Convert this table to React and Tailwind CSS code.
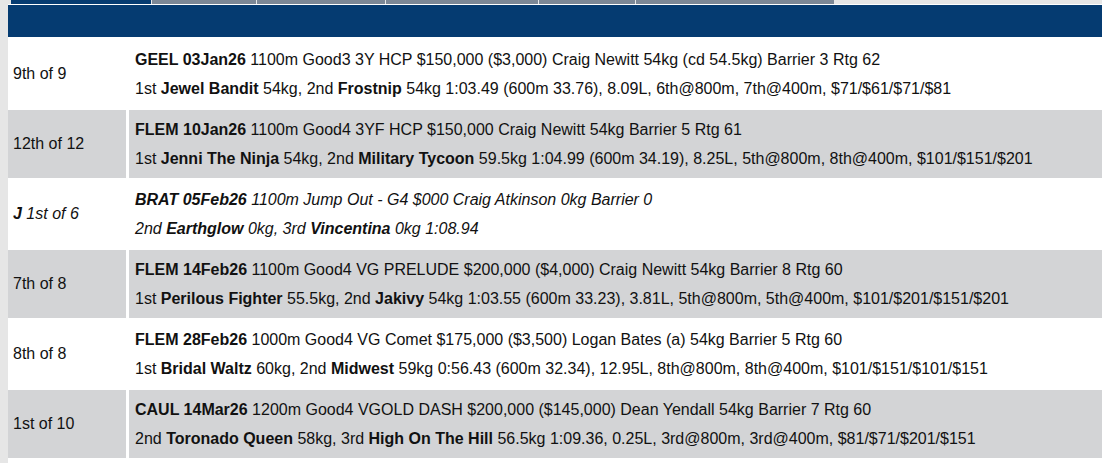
const races = [
  {
    pos: "9th of 9",
    bg: "bg-white",
    head: "GEEL 03Jan26",
    info: " 1100m Good3 3Y HCP $150,000 ($3,000) Craig Newitt 54kg (cd 54.5kg) Barrier 3 Rtg 62",
    result: [["1st ", "Jewel Bandit", " 54kg, 2nd "], ["", "Frostnip", " 54kg 1:03.49 (600m 33.76), 8.09L, 6th@800m, 7th@400m, $71/$61/$71/$81"]],
  },
  {
    pos: "12th of 12",
    bg: "bg-[#d3d4d6]",
    head: "FLEM 10Jan26",
    info: " 1100m Good4 3YF HCP $150,000 Craig Newitt 54kg Barrier 5 Rtg 61",
    result: [["1st ", "Jenni The Ninja", " 54kg, 2nd "], ["", "Military Tycoon", " 59.5kg 1:04.99 (600m 34.19), 8.25L, 5th@800m, 8th@400m, $101/$151/$201"]],
  },
  {
    pos: "1st of 6",
    jumpOut: true,
    bg: "bg-white",
    head: "BRAT 05Feb26",
    info: " 1100m Jump Out - G4 $000 Craig Atkinson 0kg Barrier 0",
    result: [["2nd ", "Earthglow", " 0kg, 3rd "], ["", "Vincentina", " 0kg 1:08.94"]],
  },
  {
    pos: "7th of 8",
    bg: "bg-[#d3d4d6]",
    head: "FLEM 14Feb26",
    info: " 1100m Good4 VG PRELUDE $200,000 ($4,000) Craig Newitt 54kg Barrier 8 Rtg 60",
    result: [["1st ", "Perilous Fighter", " 55.5kg, 2nd "], ["", "Jakivy", " 54kg 1:03.55 (600m 33.23), 3.81L, 5th@800m, 5th@400m, $101/$201/$151/$201"]],
  },
  {
    pos: "8th of 8",
    bg: "bg-white",
    head: "FLEM 28Feb26",
    info: " 1000m Good4 VG Comet $175,000 ($3,500) Logan Bates (a) 54kg Barrier 5 Rtg 60",
    result: [["1st ", "Bridal Waltz", " 60kg, 2nd "], ["", "Midwest", " 59kg 0:56.43 (600m 32.34), 12.95L, 8th@800m, 8th@400m, $101/$151/$101/$151"]],
  },
  {
    pos: "1st of 10",
    bg: "bg-[#d3d4d6]",
    head: "CAUL 14Mar26",
    info: " 1200m Good4 VGOLD DASH $200,000 ($145,000) Dean Yendall 54kg Barrier 7 Rtg 60",
    result: [["2nd ", "Toronado Queen", " 58kg, 3rd "], ["", "High On The Hill", " 56.5kg 1:09.36, 0.25L, 3rd@800m, 3rd@400m, $81/$71/$201/$151"]],
  },
];

const tabs = ["w-[104px]", "w-[128px]", "w-[152px]", "w-[96px]", "w-[198px]"];

const App = () => {
  return (
    <div className="flex w-[1102px] h-[463px] bg-white overflow-hidden font-['Liberation_Sans',Arial,sans-serif] text-[16px] text-[#111]">
      <div className="w-[8px] shrink-0 bg-[#e6e6e6]" />
      <div className="flex-1 flex flex-col">
        <div className="flex h-[4px] bg-[#e6e6e6] gap-[1px]">
          <div className="w-[2px] bg-[#e6e6e6]" />
          <div className="w-[140px] bg-[#053b71]" />
          {tabs.map((w, i) => (
            <div key={i} className={`${w} bg-[#7d8896]`} />
          ))}
        </div>
        <div className="h-[32px] mt-[1px] bg-[#053b71]" />
        <div className="flex flex-col gap-[2px] pt-[3px]">
          {races.map((race, i) => (
            <div key={i} className="flex gap-[3px] h-[68px]">
              <div className={`${race.bg} w-[118px] shrink-0 flex items-center pl-[5px]`}>
                {race.jumpOut ? (
                  <span className="italic"><b>J</b> {race.pos}</span>
                ) : (
                  race.pos
                )}
              </div>
              <div className={`${race.bg} flex-1 flex flex-col justify-center pl-[6px] leading-[29px] whitespace-nowrap ${race.jumpOut ? "italic" : ""}`}>
                <div>
                  <b>{race.head}</b>
                  {race.info}
                </div>
                <div>
                  {race.result.map((part, j) => (
                    <span key={j}>
                      {part[0]}
                      <b>{part[1]}</b>
                      {part[2]}
                    </span>
                  ))}
                </div>
              </div>
            </div>
          ))}
        </div>
      </div>
    </div>
  );
};

export default App;
